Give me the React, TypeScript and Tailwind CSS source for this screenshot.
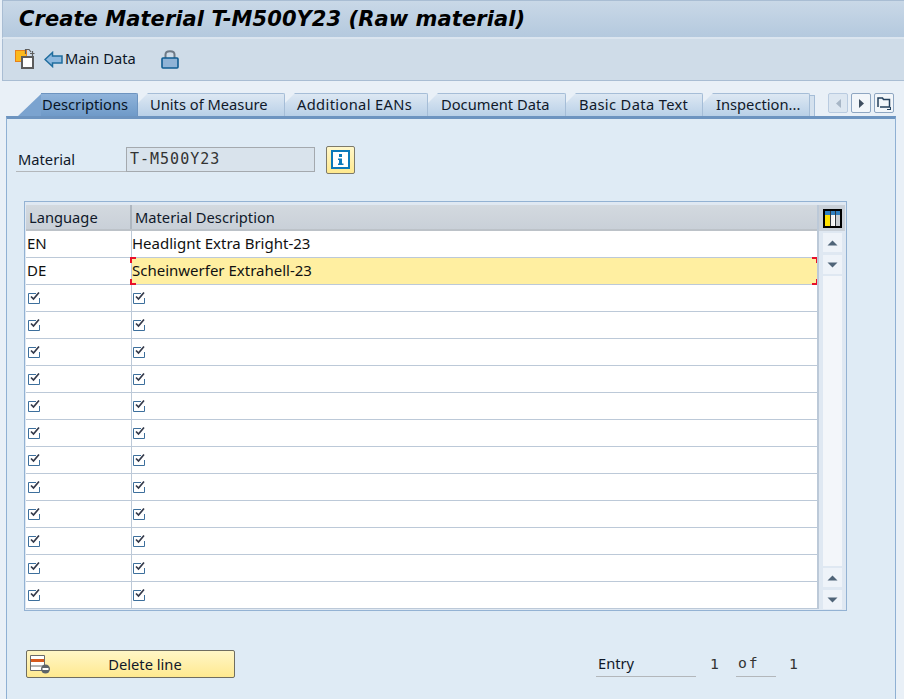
import React from "react";

const SANS = { fontFamily: '"Noto Sans", sans-serif' };
const MONO = { fontFamily: '"DejaVu Sans Mono", monospace' };

const TABS = [
  { label: "Units of Measure", width: "w-[147px]", pl: "pl-[12px]", extra: "" },
  { label: "Additional EANs", width: "w-[143px]", pl: "pl-[12px]", extra: "tracking-[0.35px]" },
  { label: "Document Data", width: "w-[138px]", pl: "pl-[13px]", extra: "" },
  { label: "Basic Data Text", width: "w-[137px]", pl: "pl-[13px]", extra: "tracking-[0.35px]" },
  { label: "Inspection...", width: "w-[107px]", pl: "pl-[13px]", extra: "" },
];

const CheckIcon = () => (
  <svg width="14" height="14" viewBox="0 0 14 14" className="block">
    <path d="M0.5 2.5H8M0.5 2.5V12.5H11.5V7" fill="none" stroke="#3d6f9c" strokeWidth="1" />
    <path d="M3 5.5L5.5 8L11 1.5" fill="none" stroke="#33394a" strokeWidth="1.7" />
  </svg>
);

const ScrollBtn = ({ up }: { up: boolean }) => (
  <div className="w-[19px] h-[19px] bg-[#eef3f9] flex items-center justify-center">
    <svg width="11" height="6" viewBox="0 0 11 6">
      {up ? <path d="M5.5 0.5L10.5 5.5H0.5Z" fill="#4f6478" /> : <path d="M0.5 0.5H10.5L5.5 5.5Z" fill="#4f6478" />}
    </svg>
  </div>
);

const NavBtn = ({ children, dim }: { children: React.ReactNode; dim?: boolean }) => (
  <div className={"w-[20px] h-[20px] rounded-[2px] border flex items-center justify-center " + (dim ? "border-[#b9cbe0] bg-[#dde7f1]" : "border-[#8ea6c2] bg-[#f2f6fa]")}>
    {children}
  </div>
);

const Row = ({ left, right, selected }: { left?: string; right?: string; selected?: boolean }) => (
  <div className="flex h-[27px] shrink-0 border-b border-[#bcc9d8] bg-white text-[15px] text-[#111]">
    <div className="w-[106px] shrink-0 pl-[1px] flex items-center border-r border-[#bcc9d8]">
      {left ? <span className="pb-[2px]">{left}</span> : <span className="pl-[1px]"><CheckIcon /></span>}
    </div>
    <div className={"relative flex-1 flex items-center " + (selected ? "bg-[#ffefa1]" : "")}>
      {right ? <span className="pb-[2px]">{right}</span> : <span className="pl-[1px]"><CheckIcon /></span>}
      {selected && (
        <>
          <span className="absolute -left-[2px] -top-[1px] w-[6px] h-[6px] border-l-2 border-t-2 border-[#e8102a]" />
          <span className="absolute -left-[2px] -bottom-[1px] w-[6px] h-[6px] border-l-2 border-b-2 border-[#e8102a]" />
          <span className="absolute -right-[1px] -top-[1px] w-[6px] h-[6px] border-r-2 border-t-2 border-[#e8102a]" />
          <span className="absolute -right-[1px] -bottom-[1px] w-[6px] h-[6px] border-r-2 border-b-2 border-[#e8102a]" />
        </>
      )}
    </div>
  </div>
);

export default function App() {
  return (
    <div className="w-[904px] h-[699px] overflow-hidden bg-[#e9f0f7] flex flex-col" style={SANS}>
      {/* title */}
      <div className="h-[39px] shrink-0 ml-[2px] border-l border-t border-b-2 border-[#a9bdd3] border-b-[#dbe5ef] bg-gradient-to-b from-[#c9d8e7] to-[#b4c9de] flex items-center pl-[16px]">
        <span className="text-[21px] font-bold italic text-black leading-none tracking-[0.07px]" style={{ fontFamily: '"DejaVu Sans", sans-serif' }}>
          Create Material T-M500Y23 (Raw material)
        </span>
      </div>

      {/* toolbar */}
      <div className="h-[42px] shrink-0 ml-[2px] border-l border-b border-[#a9bdd3] bg-[#cfdce8] flex items-center pl-[12px] text-[14.7px] text-[#0c1626]">
        <svg width="20" height="21" viewBox="0 0 20 21" className="shrink-0 -mt-[2px]">
          <rect x="0.5" y="2.5" width="11" height="11" fill="#fbb91d" stroke="#e8811a" />
          <path d="M7 9H18V20H7Z" fill="#fff" stroke="#5c5c5c" strokeWidth="2" />
          <path d="M10.5 6V1.5H14L16 4M17.5 3V8M15 5.5H19.5" fill="none" stroke="#5c5c5c" strokeWidth="1.2" />
        </svg>
        <svg width="19" height="17" viewBox="0 0 19 17" className="shrink-0 ml-[9px] -mt-[1px]">
          <path d="M1 8.5L8.5 1.5V5H18V12H8.5V15.5Z" fill="#8db8de" stroke="#1f6d9e" strokeWidth="1.5" />
        </svg>
        <span className="ml-[2px] pb-[2px]">Main Data</span>
        <svg width="18" height="20" viewBox="0 0 18 20" className="shrink-0 ml-[25px] -mt-[2px]">
          <path d="M4.5 9V5.5C4.5 1 13.5 1 13.5 5.5V9" fill="none" stroke="#6e7a86" strokeWidth="2" />
          <rect x="1" y="9" width="16" height="10" rx="1" fill="#8fb3d6" stroke="#0f5c91" strokeWidth="1.6" />
        </svg>
      </div>

      {/* tabs row */}
      <div className="h-[35px] shrink-0 flex items-end pl-[18px] text-[14.7px] text-[#10192a]">
        <div className="flex items-end h-[23px]">
          <svg width="24" height="23" viewBox="0 0 24 23" className="shrink-0 -mr-[1px]">
            <path d="M0 23L23 1H24V23Z" fill="#7ba3cf" />
          </svg>
          <div className="w-[97px] h-[23px] pb-[2px] bg-gradient-to-b from-[#8fb3da] to-[#6f9ac8] border-t border-r border-[#6d94c0] rounded-tr-[2px] flex items-center pl-[1px] text-[#071426]">
            Descriptions
          </div>
          {TABS.map((t) => (
            <div key={t.label} className={"relative h-[23px] pb-[2px] shrink-0 bg-gradient-to-b from-[#dde8f3] to-[#b9d0e7] border-t border-r border-[#a5bdd7] rounded-tr-[2px] [clip-path:polygon(10px_0,100%_0,100%_100%,0_100%,0_10px)] flex items-center whitespace-nowrap " + t.width + " " + t.pl + " " + t.extra}>
              {t.label}
            </div>
          ))}
          <div className="w-[5px] h-[21px] bg-[#d4e1ee] border-t border-r border-[#a5bdd7]" />
        </div>
        <div className="flex gap-[3px] ml-[13px] mb-[3px]">
          <NavBtn dim>
            <svg width="5" height="9" viewBox="0 0 5 9"><path d="M5 0V9L0 4.5Z" fill="#a7b6c6" /></svg>
          </NavBtn>
          <NavBtn>
            <svg width="5" height="9" viewBox="0 0 5 9"><path d="M0 0V9L5 4.5Z" fill="#3f4f60" /></svg>
          </NavBtn>
          <NavBtn>
            <svg width="14" height="13" viewBox="0 0 14 13">
              <path d="M1 10V1H5.5L6.5 2.5H12.5V10H3" fill="none" stroke="#24405c" strokeWidth="1.5" />
              <path d="M10 12.5H13.5V10" fill="none" stroke="#24405c" strokeWidth="1.1" />
            </svg>
          </NavBtn>
        </div>
      </div>

      {/* panel */}
      <div className="flex-1 ml-[6px] mr-[8px] border-l border-r border-[#8fb0d3] border-t-[3px] border-t-[#6d94c0] bg-[#dfebf5] text-[14.7px] text-[#10192a]">
        <div className="h-[29px] mt-[26px] ml-[9px] flex items-center">
          <div className="w-[110px] h-[25px] border-b border-[#b3b7bb] pl-[2px] flex items-center">Material</div>
          <div className="w-[189px] h-[25px] border border-[#a4a9ae] bg-[#d9e3ec] pl-[3px] flex items-center text-[15px] tracking-[1px] text-[#333]" style={MONO}>
            T-M500Y23
          </div>
          <div className="w-[29px] h-[28px] ml-[11px] rounded-[2px] border border-[#7d7a6a] bg-gradient-to-b from-[#fff7c9] to-[#ffe98d] flex items-center justify-center">
            <svg width="19" height="19" viewBox="0 0 19 19">
              <rect x="1" y="1" width="17" height="17" fill="#fff" stroke="#0b79ba" strokeWidth="2" />
              <rect x="8" y="4" width="3" height="3" fill="#0b79ba" />
              <path d="M7 8.5H11V13.5H12.5V15H7V13.5H8V10H7Z" fill="#0b79ba" />
            </svg>
          </div>
        </div>

        {/* table */}
        <div className="w-[823px] h-[410px] mt-[27px] ml-[17px] border border-[#93b2d3] px-[1px] pt-[3px] pb-[1px] flex bg-[#dfe8f2]">
          <div className="w-[792px] flex flex-col overflow-hidden">
            <div className="flex h-[26px] shrink-0 bg-gradient-to-b from-[#d3d9df] to-[#c9d0d8] border-b-2 border-[#bcc2c8] text-[#10192a]">
              <div className="w-[106px] shrink-0 pl-[3px] flex items-center border-r-2 border-[#aeb6bf]">Language</div>
              <div className="flex-1 pl-[3px] flex items-center">Material Description</div>
            </div>
            <Row left="EN" right="Headlignt Extra Bright-23" />
            <Row left="DE" right="Scheinwerfer Extrahell-23" selected />
            {Array.from({ length: 12 }).map((_, i) => (
              <Row key={i} />
            ))}
          </div>
          <div className="flex-1 flex flex-col items-center border-l-2 border-[#bcc9d8]">
            <div className="w-[26px] h-[26px] bg-[#c9d0d8] flex items-center justify-center">
              <svg width="19" height="19" viewBox="0 0 19 19">
                <rect x="1" y="1" width="17" height="17" fill="#fff" stroke="#000" strokeWidth="2" />
                <rect x="2" y="2" width="15" height="4" fill="#2f7fc1" />
                <rect x="2" y="6" width="5" height="11" fill="#ffe000" />
                <rect x="7" y="2" width="1" height="15" fill="#30363c" />
                <rect x="8" y="6" width="3" height="11" fill="#f2f2f2" />
                <rect x="12" y="2" width="1" height="15" fill="#30363c" />
                <rect x="13" y="6" width="4" height="11" fill="#c9ced3" />
              </svg>
            </div>
            <div className="mt-[2px]"><ScrollBtn up /></div>
            <div className="mt-[3px]"><ScrollBtn up={false} /></div>
            <div className="mt-[2px] w-[19px] flex-1 bg-[#f3f6fa]" />
            <div className="mt-[2px]"><ScrollBtn up /></div>
            <div className="mt-[3px]"><ScrollBtn up={false} /></div>
          </div>
        </div>

        {/* bottom */}
        <div className="flex items-center mt-[38px] ml-[19px] h-[30px]">
          <div className="relative w-[209px] h-[28px] rounded-[2px] border border-[#6f6d60] bg-gradient-to-b from-[#fff6c6] to-[#ffe98f] flex items-center justify-center pl-[29px] text-[#10192a]">
            <svg width="21" height="19" viewBox="0 0 21 19" className="absolute left-[3px] top-[4px]">
              <path d="M0.5 0.5H14.5V15.5H0.5Z" fill="#fff" stroke="#6a6a6a" />
              <rect x="1" y="4" width="13" height="3" fill="#d65a1f" />
              <path d="M1 11H14" stroke="#6a6a6a" />
              <circle cx="15.5" cy="14" r="4.5" fill="#5d6469" />
              <rect x="12.5" y="13" width="6" height="2" fill="#fff" />
            </svg>
            Delete line
          </div>
          <div className="ml-[361px] w-[100px] h-[25px] border-b border-[#b3b7bb] pl-[2px] flex items-center">Entry</div>
          <div className="w-[15px] ml-[11px] text-[#333] text-center" style={MONO}>1</div>
          <div className="w-[40px] ml-[14px] h-[25px] border-b border-[#b3b7bb] pl-[2px] flex items-center tracking-[2px] text-[#333]" style={MONO}>of</div>
          <div className="w-[15px] ml-[10px] text-[#333] text-center" style={MONO}>1</div>
        </div>
      </div>
    </div>
  );
}
